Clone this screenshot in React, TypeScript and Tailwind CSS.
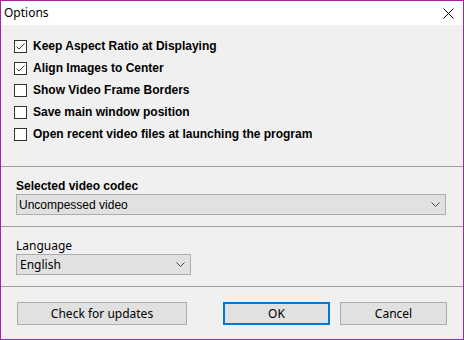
import React from "react";

const seg = { fontFamily: '"Segoe UI", "Noto Sans", "Open Sans", sans-serif' };
const ari = { fontFamily: '"Liberation Sans", Arial, sans-serif' };

function Check({ checked, label }: { checked: boolean; label: string }) {
  return (
    <div className="flex items-center h-[22px] pl-[13px]">
      <div className="w-[13px] h-[13px] border border-[#333333] bg-white flex items-center justify-center shrink-0">
        {checked && (
          <svg width="11" height="11" viewBox="0 0 11 11">
            <polyline points="1.5,5.5 4,8 9.5,2.5" fill="none" stroke="#333" strokeWidth="1" />
          </svg>
        )}
      </div>
      <span className="ml-[6px] text-[12px] font-bold text-black leading-none" style={ari}>
        {label}
      </span>
    </div>
  );
}

function Chevron() {
  return (
    <svg width="9" height="5" viewBox="0 0 9 5">
      <polyline points="0.5,0.5 4.5,4.5 8.5,0.5" fill="none" stroke="#444" strokeWidth="1" />
    </svg>
  );
}

export default function App() {
  return (
    <div className="w-[464px] h-[340px] border border-[#a524a3] flex flex-col bg-[#f0f0f0] overflow-hidden">
      <div className="h-[24px] bg-white flex items-center justify-between pl-[3px] pr-[9px] shrink-0">
        <span className="text-[12px] text-black" style={seg}>Options</span>
        <svg width="11" height="11" viewBox="0 0 11 11">
          <path d="M0.5 0.5 L10.5 10.5 M10.5 0.5 L0.5 10.5" stroke="#000" strokeWidth="1" />
        </svg>
      </div>
      <div className="pt-[10px] pb-[21px]">
        <Check checked label="Keep Aspect Ratio at Displaying" />
        <Check checked label="Align Images to Center" />
        <Check checked={false} label="Show Video Frame Borders" />
        <Check checked={false} label="Save main window position" />
        <Check checked={false} label="Open recent video files at launching the program" />
      </div>
      <div className="h-px bg-[#a0a0a0]" />
      <div className="pt-[10px] pb-[11px] pl-[15px] pr-[17px]">
        <div className="h-[17px] flex items-center text-[12px] font-bold text-black" style={ari}>
          Selected video codec
        </div>
        <div className="h-[21px] border border-[#adadad] bg-[#e1e1e1] flex items-center justify-between pl-[2px] pr-[5px]">
          <span className="text-[12px] text-black" style={ari}>Uncompessed video</span>
          <Chevron />
        </div>
      </div>
      <div className="h-px bg-[#a0a0a0]" />
      <div className="pt-[10px] pb-[11px] pl-[15px]">
        <div className="h-[17px] flex items-center text-[12px] text-black" style={seg}>
          Language
        </div>
        <div className="w-[175px] h-[21px] border border-[#adadad] bg-[#e1e1e1] flex items-center justify-between pl-[3px] pr-[5px]">
          <span className="text-[12px] text-black" style={seg}>English</span>
          <Chevron />
        </div>
      </div>
      <div className="h-px bg-[#a0a0a0]" />
      <div className="pt-[15px] pl-[16px] flex">
        <button className="w-[170px] h-[23px] border border-[#adadad] bg-[#e1e1e1] text-[12px] text-black flex items-center justify-center" style={seg}>
          Check for updates
        </button>
        <button className="ml-[36px] w-[107px] h-[23px] border-2 border-[#0078d7] bg-[#e1e1e1] text-[12px] text-black flex items-center justify-center" style={seg}>
          OK
        </button>
        <button className="ml-[10px] w-[107px] h-[23px] border border-[#adadad] bg-[#e1e1e1] text-[12px] text-black flex items-center justify-center" style={seg}>
          Cancel
        </button>
      </div>
    </div>
  );
}
